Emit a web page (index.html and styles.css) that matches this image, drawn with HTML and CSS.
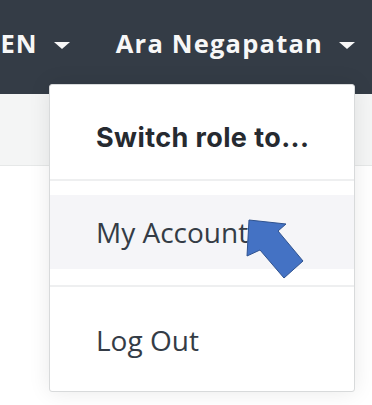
FILE: index.html
```html
<!DOCTYPE html>
<html lang="en">
<head>
<meta charset="utf-8">
<title>Account menu</title>
<link rel="stylesheet" href="styles.css">
</head>
<body>
<header class="topbar">
  <div class="nav-item">EN<span class="caret"></span></div>
  <div class="nav-item nav-user">Ara Negapatan<span class="caret"></span></div>
</header>
<div class="subbar"></div>
<main class="content"></main>

<div class="menu">
  <div class="menu-title">Switch role to...</div>
  <div class="menu-divider"></div>
  <div class="menu-item menu-item-hover">My Account</div>
  <div class="menu-divider"></div>
  <div class="menu-item menu-item-last">Log Out</div>
</div>

<svg class="pointer" width="70" height="70" viewBox="0 0 70 70">
  <polygon points="4,4 41,8 33,15 58,45 39,62 15,34 2,40" fill="#4472c4" stroke="#2f528f" stroke-width="1" stroke-linejoin="miter"/>
</svg>
</body>
</html>
```
FILE: styles.css
```css
html, body {
  margin: 0;
  padding: 0;
}
body {
  width: 372px;
  height: 405px;
  overflow: hidden;
  background: #ffffff;
  position: relative;
  font-family: "Open Sans", "Liberation Sans", sans-serif;
}
.topbar {
  height: 94px;
  background: #343c46;
  display: flex;
  justify-content: flex-end;
  align-items: center;
  padding-right: 17px;
  gap: 46px;
  color: #f7f7f7;
  font-family: "Open Sans", "Liberation Sans", sans-serif;
  font-weight: 700;
  font-size: 25.5px;
  box-sizing: border-box;
}
.nav-item {
  display: flex;
  align-items: center;
  white-space: nowrap;
  margin-top: -8px;
  letter-spacing: 1.2px;
}
.caret {
  display: inline-block;
  width: 0;
  height: 0;
  border-left: 8.5px solid transparent;
  border-right: 8.5px solid transparent;
  border-top: 7px solid #f7f7f7;
  margin-left: 16px;
  margin-top: 4px;
}
.subbar {
  height: 71px;
  background: #f4f5f5;
  border-bottom: 1px solid #e6e8e8;
}
.content {
  height: 240px;
  background: #ffffff;
}
.menu {
  position: absolute;
  left: 49px;
  top: 84px;
  width: 306px;
  height: 308px;
  box-sizing: border-box;
  background: #ffffff;
  border: 1px solid #d8dadb;
  border-radius: 3px;
  box-shadow: 0 0 22px rgba(0, 0, 0, 0.09);
}
.menu-title {
  font-family: "Inter", "Liberation Sans", sans-serif;
  font-weight: 700;
  font-size: 27px;
  line-height: 32px;
  letter-spacing: 0.4px;
  color: #262a30;
  padding: 37px 0 25px 46px;
  white-space: nowrap;
}
.menu-divider {
  height: 2px;
  background: #eeeff0;
}
.menu-item {
  font-size: 28px;
  line-height: 36px;
  color: #343c46;
  padding-left: 46px;
  white-space: nowrap;
}
.menu-item-hover {
  margin: 14px 0 16px;
  padding-top: 19px;
  padding-bottom: 19px;
  background: #f5f5f8;
}
.menu-item-last {
  padding-top: 35px;
}
.pointer {
  position: absolute;
  left: 245px;
  top: 216px;
}
```
